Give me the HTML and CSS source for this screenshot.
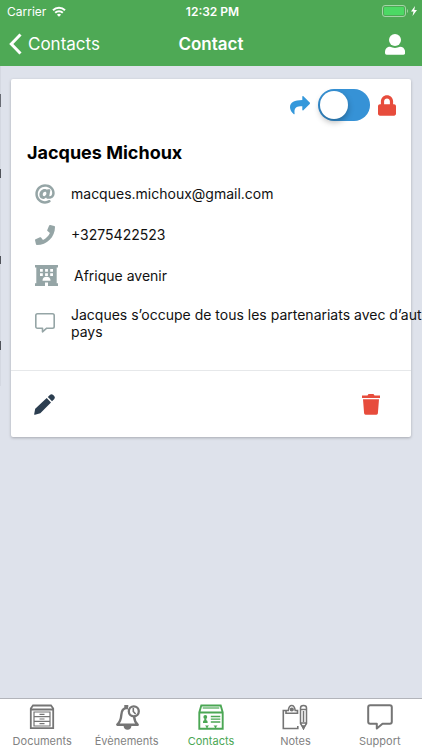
FILE: index.html
```html
<!DOCTYPE html>
<html lang="fr">
<head>
<meta charset="utf-8">
<meta name="viewport" content="width=device-width, initial-scale=1">
<title>Contact</title>
<link rel="stylesheet" href="styles.css">
</head>
<body>

<header class="header">
  <div class="statusbar">
    <div class="carrier">
      <span>Carrier</span>
      <svg width="14" height="11" viewBox="0 0 14 11" fill="none" stroke="#fff" stroke-width="2">
        <path d="M1 4.2a8.6 8.6 0 0 1 12 0M3.2 6.8a5.4 5.4 0 0 1 7.6 0"/>
        <path d="M7 10.8L4.9 8.7a3 3 0 0 1 4.2 0z" fill="#fff" stroke="none"/>
      </svg>
    </div>
    <div class="clock">12:32 PM</div>
    <div class="power">
      <svg width="36" height="12" viewBox="0 0 36 12">
        <rect x=".5" y=".5" width="23" height="11" rx="2.5" fill="none" stroke="#a5d4a8"/>
        <rect x="2" y="2" width="20" height="8" rx="1" fill="#4cd964"/>
        <path d="M25 4v4c1.300-.6 1.300-3.400 0-4z" fill="#a5d4a8"/>
        <path d="M33 1l-4 5.600h2.500L30.500 11l4.500-6h-2.700z" fill="#fff"/>
      </svg>
    </div>
  </div>
  <nav class="navbar">
    <button class="back_btn">
      <svg width="13" height="22" viewBox="0 0 13 22" fill="none" stroke="#fff" stroke-width="3">
        <path d="M11.500 1.500L2.300 11l9.200 9.500"/>
      </svg>
      Contacts
    </button>
    <h1 class="nav_title">Contact</h1>
    <button class="user_btn" aria-label="Profil">
      <svg width="20" height="21" viewBox="0 0 20 21" fill="#fff">
        <circle cx="10" cy="6" r="6"/>
        <path d="M5 12.800q5 2.200 10 0c3.500 0 5.200 2.500 5.200 6 0 1.200-.7 1.900-1.900 1.900H1.800C.6 20.700 0 20 0 18.800c0-3.500 1.500-6 5-6z"/>
      </svg>
    </button>
  </nav>
</header>

<main class="content">
  <div class="previous_page"></div>
  <section class="card">
    <div class="sharing">
      <svg width="20" height="19" viewBox="0 0 20 19" fill="#3498db">
        <path d="M12.300.6c0-.6.7-.8 1.100-.4l6.300 6.400c.4.400.4.900 0 1.300l-6.300 6.300c-.4.400-1.100.2-1.100-.4v-3.500C7 10.200 3.800 11.300 4.600 17.600c.1.700-.5 1-1 .5C1.500 16.200 0 13.800 0 11.300c0-5.100 4.600-7 12.300-7.200z"/>
      </svg>
      <input type="checkbox" class="switch" aria-label="Contact partagé">
      <svg width="18" height="21" viewBox="0 0 448 512" fill="#e74c3c">
        <path d="M400 224h-24v-72C376 68.200 307.800 0 224 0S72 68.200 72 152v72H48c-26.500 0-48 21.500-48 48v192c0 26.500 21.500 48 48 48h352c26.500 0 48-21.500 48-48V272c0-26.500-21.500-48-48-48zm-104 0H152v-72c0-39.700 32.300-72 72-72s72 32.300 72 72v72z"/>
      </svg>
    </div>
    <h2 class="name">Jacques Michoux</h2>
    <ul class="details">
      <li class="detail">
        <svg width="20" height="20" viewBox="0 0 512 512" fill="#95a5a6">
          <path d="M256 8C118.941 8 8 118.919 8 256c0 137.059 110.919 248 248 248 48.154 0 95.342-14.140 135.408-40.223 12.005-7.815 14.625-24.288 5.552-35.372l-10.177-12.433c-7.671-9.371-21.179-11.667-31.373-5.129C325.920 429.757 291.314 440 256 440c-101.458 0-184-82.542-184-184S154.542 72 256 72c100.139 0 184 57.619 184 160 0 38.786-21.093 79.742-58.170 83.693-17.349-.454-16.910-12.857-13.476-30.024l23.433-121.110C394.653 149.750 383.308 136 368.225 136h-44.981a13.518 13.518 0 0 0-13.432 11.993l-.01.092c-14.697-17.901-40.448-21.775-59.971-21.775-74.580 0-137.831 62.234-137.831 151.460 0 65.303 36.785 105.870 96 105.870 26.984 0 57.369-15.637 74.991-38.333 9.522 34.104 40.613 34.104 70.710 34.104C462.609 379.410 504 307.798 504 232 504 95.653 394.023 8 256 8zm-21.680 304.430c-22.249 0-36.070-15.623-36.070-40.771 0-44.993 30.779-72.729 58.630-72.729 22.292 0 35.601 15.241 35.601 40.770 0 45.061-33.875 72.730-58.161 72.730z"/>
        </svg>
        <span class="detail_text">macques.michoux@gmail.com</span>
      </li>
      <li class="detail">
        <svg width="20" height="20" viewBox="0 0 512 512" fill="#95a5a6">
          <path d="M493.400 24.600l-104-24c-11.300-2.600-22.900 3.300-27.500 13.900l-48 112c-4.200 9.800-1.400 21.300 6.900 28l60.600 49.600c-36 76.700-98.900 140.500-177.200 177.200l-49.600-60.600c-6.800-8.300-18.200-11.100-28-6.900l-112 48C3.900 366.500-2 378.100.6 389.400l24 104C27.100 504.200 36.700 512 48 512c256.100 0 464-207.500 464-464 0-11.200-7.700-20.900-18.600-23.400z"/>
        </svg>
        <span class="detail_text">+3275422523</span>
      </li>
      <li class="detail">
        <svg width="23" height="21" viewBox="0 0 23 21">
          <path d="M0 0h23v2.500h-1.300v15.800H23V21H13v-3.600h-3V21H0v-2.700h1.300V2.500H0z" fill="#95a5a6"/>
          <path d="M5 4h2.800v2.700H5zM10.100 4h2.800v2.700h-2.800zM15.200 4H18v2.700h-2.800zM5 8.300h2.800V11H5zM10.100 8.300h2.800V11h-2.800zM15.200 8.300H18V11h-2.800zM7.500 15.800a4 4 0 0 1 8 0z" fill="#fff"/>
        </svg>
        <span class="detail_text">Afrique avenir</span>
      </li>
      <li class="detail">
        <svg width="20" height="20" viewBox="0 0 20 20" fill="none" stroke="#95a5a6" stroke-width="1.600" stroke-linejoin="round">
          <path d="M2.500.8h15q1.700 0 1.700 1.700v11q0 1.700-1.700 1.700h-5.800L7.500 18.800v-3.600h-5Q.8 15.200.8 13.500v-11Q.8.8 2.500.8z"/>
        </svg>
        <span class="detail_text">Jacques s’occupe de tous les partenariats avec d’autres pays</span>
      </li>
    </ul>
    <div class="actions">
      <button class="action_btn" aria-label="Modifier">
        <svg width="21" height="21" viewBox="0 0 21 21" fill="#2c3e50">
          <path d="M12.700 4.100l4.300 4.300L6.300 19.300 1 20.700q-1 .2-.8-.8l1-5.200zM13.800 3l2.100-2.100q1.600-1.500 3.300.2l.9.900q1.500 1.600 0 3.200l-2.100 2.100z"/>
        </svg>
      </button>
      <button class="action_btn" aria-label="Supprimer">
        <svg width="18" height="21" viewBox="0 0 18 21" fill="#e74c3c">
          <path d="M0 1.500h5.500L6.500 0h5l1 1.500H18v2.600H0zM1 5.300h16l-1.100 14q-.1 1.400-1.500 1.400H3.600q-1.400 0-1.500-1.400z"/>
        </svg>
      </button>
    </div>
  </section>
</main>

<nav class="tabs">
  <a class="tab" href="#documents">
    <svg width="26" height="26" viewBox="0 0 26 26" fill="none" stroke="#757575">
      <path d="M1.800 24.200V4.500L4 1.500h18l2.200 3v19.700zM2 5.500h22" stroke-width="1.800"/>
      <path d="M5 8h16v14H5zM5 12.600h16M5 17.300h16M10.500 10.300h5M10.500 15h5M10.500 19.700h5" stroke-width="1.200"/>
    </svg>
    Documents
  </a>
  <a class="tab" href="#evenements">
    <svg width="26" height="26" viewBox="0 0 26 26" fill="none" stroke="#757575">
      <path d="M14 4.200C9 3.500 7.600 7 7.300 11 7 16 5.900 18 3.300 20.700h20.400c-2.300-2-3.300-4-3.600-8" stroke-width="2.400" stroke-linejoin="round"/>
      <path d="M9.500 21.500h8q-.5 4.300-4 4.300t-4-4.300z" fill="#757575" stroke="none"/>
      <circle cx="19.800" cy="7.300" r="5" stroke-width="2.300"/>
      <path d="M19.300 4v3.500l2.300 2.500" stroke-width="1.600"/>
      <path d="M11.300 4V2h3" stroke-width="2"/>
    </svg>
    Évènements
  </a>
  <a class="tab active" href="#contacts">
    <svg width="26" height="26" viewBox="0 0 26 26" fill="none" stroke="#4ba754">
      <path d="M1.300 24.800V8.500L3.300 1.500h19.400l2 7v16.300zM1.300 8.500h23.400" stroke-width="1.900"/>
      <path d="M4.700 4h16.600" stroke-width="1.200"/>
      <path d="M12.800 12.500h9.500M12.800 15.200h9.500M12.800 18h9.500" stroke-width="1.300"/>
      <circle cx="7.300" cy="13" r="1.900" fill="#4ba754" stroke="none"/>
      <path d="M6.300 14.500h2v1.700q1.300.3 1.300 1.500v1.300H5v-1.300q0-1.200 1.300-1.500zM7 21.500h4l-1.300 1.500v1.500H8.300V23zM15.500 21.500h4l-1.300 1.500v1.500h-1.400V23z" fill="#4ba754" stroke="none"/>
    </svg>
    Contacts
  </a>
  <a class="tab" href="#notes">
    <svg width="26" height="26" viewBox="0 0 26 26" fill="none" stroke="#757575" stroke-width="1.600">
      <path d="M4.500 6.500H1.300v18h14.500v-2.500M4 9.300h11.500V6.500h-2.300Q12.500 1.500 9.700 1.500T6.300 6.500H4z"/>
      <circle cx="9.800" cy="5.500" r="1.300" fill="#757575"/>
      <path d="M18.500 4q0-2.500 3-2.500t3 2.500v15.500l-3 4.800-3-4.800zM18.500 5.500h6M18.500 19h6M21.500 7v11" stroke-width="1.500"/>
      <path d="M20.500 22h2l-1 2.500z" fill="#757575"/>
    </svg>
    Notes
  </a>
  <a class="tab" href="#support">
    <svg width="26" height="26" viewBox="0 0 26 26" fill="none" stroke="#757575" stroke-width="2" stroke-linejoin="round">
      <path d="M3.200 1.200h19.600q2 0 2 2v14.600q0 2-2 2h-7.300l-5.700 4.700v-4.700H3.200q-2 0-2-2V3.200q0-2 2-2z"/>
    </svg>
    Support
  </a>
</nav>

</body>
</html>
```
FILE: styles.css
```css
* {
    box-sizing: border-box;
}

html, body {
    height: 100%;
}

body {
    margin: 0;
    display: flex;
    flex-direction: column;
    overflow: hidden;
    background-color: #dee2eb;
    color: #111;
    font-family: Inter, "Liberation Sans", sans-serif;
    font-size: 14px;
}

svg {
    display: block;
    flex: none;
}

button {
    padding: 0;
    border: none;
    background: none;
    font: inherit;
    cursor: pointer;
}

.header {
    background-color: #4ea955;
    color: #fff;
}

.statusbar, .navbar {
    display: grid;
    grid-template-columns: 1fr auto 1fr;
    align-items: center;
}

.statusbar {
    height: 22px;
    padding: 0 4px 0 7px;
    font-size: 12px;
}

.carrier {
    display: flex;
    align-items: center;
    gap: 6px;
}

.clock {
    font-weight: 600;
}

.power {
    justify-self: end;
}

.navbar {
    height: 44px;
    padding: 0 9px;
}

.back_btn {
    display: flex;
    align-items: center;
    gap: 6px;
    color: #fff;
    font-size: 17px;
}

.nav_title {
    margin: 0;
    font-size: 17px;
    font-weight: 600;
}

.user_btn {
    justify-self: end;
    margin-right: 8px;
}

.content {
    position: relative;
    flex: 1;
    padding: 13px 11px;
}

/* edge of the contact list that stays under this page */
.previous_page {
    position: absolute;
    top: 0;
    left: 0;
    width: 1px;
    height: 320px;
    background: linear-gradient(#d4d8e1 28px, #696c74 28px, #696c74 41px, #d4d8e1 41px, #d4d8e1 103px, #50535a 103px, #50535a 112px, #d4d8e1 112px, #d4d8e1 190px, #50535a 190px, #50535a 198px, #d4d8e1 198px, #d4d8e1 275px, #50535a 275px, #50535a 284px, #d4d8e1 284px);
}

.card {
    background-color: #fff;
    border-radius: 2px;
    box-shadow: 0 1px 3px rgba(0, 0, 0, 0.25);
}

.sharing {
    display: flex;
    justify-content: flex-end;
    align-items: center;
    gap: 8px;
    height: 52px;
    padding-right: 15px;
}

.switch {
    appearance: none;
    display: flex;
    align-items: center;
    width: 52px;
    height: 32px;
    margin: 0;
    padding: 2px;
    border-radius: 16px;
    background-color: #3692d6;
    cursor: pointer;
}

.switch::before {
    content: "";
    width: 28px;
    height: 28px;
    border-radius: 50%;
    background-color: #fff;
    box-shadow: 0 3px 6px rgba(0, 0, 0, 0.3);
}

.switch:checked::before {
    margin-left: auto;
}

.name {
    margin: 0;
    padding: 11px 16px 9px;
    color: #000;
    font-size: 18px;
    font-weight: 700;
    line-height: 22px;
}

.details {
    margin: 0;
    padding: 0 0 20px 24px;
    list-style: none;
}

.detail {
    display: flex;
    align-items: center;
    gap: 16px;
    min-height: 41px;
    padding: 3px 0;
    line-height: 17px;
}

.detail:last-child {
    padding: 10px 0;
}

/* long comments keep the full row width beside the icon */
.detail:last-child .detail_text {
    flex: none;
    width: 100%;
}

.actions {
    display: flex;
    justify-content: space-between;
    align-items: center;
    height: 67px;
    padding: 0 31px 0 23px;
    border-top: 1px solid #e6e8ea;
}

.tabs {
    display: flex;
    height: 52px;
    border-top: 1px solid #b2b4ba;
    background-color: #fff;
}

.tab {
    flex: 1;
    display: flex;
    flex-direction: column;
    align-items: center;
    gap: 4px;
    padding-top: 5px;
    color: #828282;
    font-size: 11px;
    line-height: 14px;
    text-decoration: none;
}

.tab.active {
    color: #4ba754;
}
```
